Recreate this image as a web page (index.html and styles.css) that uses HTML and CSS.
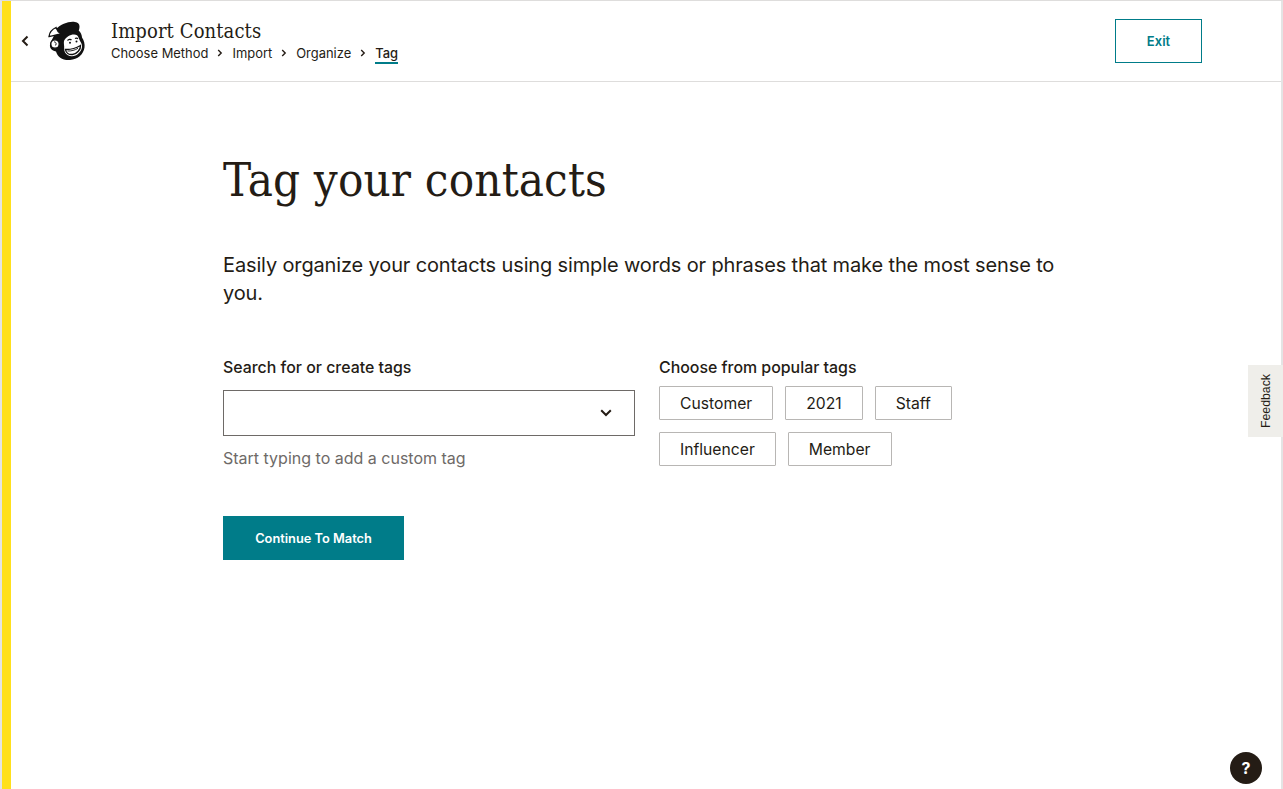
FILE: index.html
```html
<!DOCTYPE html>
<html lang="en">
<head>
<meta charset="utf-8">
<title>Import Contacts</title>
<link rel="stylesheet" href="styles.css">
</head>
<body>
<div class="frame">
  <div class="stripe"></div>
  <div class="page">
    <header class="topbar">
      <button class="back" aria-label="Back">
        <svg width="10" height="14" viewBox="0 0 10 14"><path d="M7.500 2.500 3 7l4.500 4.500" fill="none" stroke="#241c15" stroke-width="2"/></svg>
      </button>
      <svg class="logo" width="38" height="40" viewBox="0 0 38 40">
        <path d="M8 8C13 3 21 0 27 1c3 .5 4.500 2 4.500 4.500 0 1.500-.3 3-.8 4 2 2 3.300 4.500 3.300 7 2 3 3 6.500 2.500 10-1 7-7 12-14.500 12.500-7.500.5-12.500-3-14-8.500C3.500 29.500 1.500 27 2 23.500 2.500 20 6 17 8 8z" fill="#111"/>
        <path d="M1 15.500C1.500 11.500 4.500 8 8 6.500c1 3 2.500 5 5 6.500-4 .5-8.500 2-12 2.500z" fill="#fff" stroke="#111" stroke-width="1.300"/>
        <circle cx="7" cy="23" r="4.200" fill="#fff" stroke="#111" stroke-width="1.300"/>
        <path d="M6 21c2-.5 3 2.500 1 3.500" fill="none" stroke="#111" stroke-width="1"/>
        <path d="M16 20c2-4 6-6.500 10-6.500 2.500 0 4 1 4.500 3 .5 2 2.500 4.500 3.500 7.500.5 4-2 8.500-6.500 10.500-4 1.500-8.500.5-10.500-3-1.500-3-.5-5.500-1-7.500-.2-1.500-.2-3 0-4z" fill="#fff"/>
        <path d="M19.500 19.500c1.200-1.300 3-1.500 4-.5M27 17.500c1-.6 2.300-.4 2.800.5" fill="none" stroke="#111" stroke-width="1.200"/>
        <circle cx="22" cy="21.800" r="1" fill="#111"/>
        <circle cx="28.500" cy="20.500" r="1" fill="#111"/>
        <path d="M17.500 28.500c4.500.2 10-1 15-4 .3 4-3.500 8.500-8 9-3.500.4-6.500-1.500-7-5z" fill="#fff" stroke="#111" stroke-width="1.400"/>
        <path d="M19.500 30c3.500.2 7.500-.8 10.500-2.700" fill="none" stroke="#111" stroke-width=".9"/>
      </svg>
      <div class="titles">
        <div class="flow-title">Import Contacts</div>
        <nav class="crumbs">
          <span>Choose Method</span>
          <svg class="sep" width="6" height="8" viewBox="0 0 6 8"><path d="M1.200 1 4.200 4l-3 3" fill="none" stroke="#241c15" stroke-width="1.400"/></svg>
          <span>Import</span>
          <svg class="sep" width="6" height="8" viewBox="0 0 6 8"><path d="M1.200 1 4.200 4l-3 3" fill="none" stroke="#241c15" stroke-width="1.400"/></svg>
          <span>Organize</span>
          <svg class="sep" width="6" height="8" viewBox="0 0 6 8"><path d="M1.200 1 4.200 4l-3 3" fill="none" stroke="#241c15" stroke-width="1.400"/></svg>
          <span class="current">Tag</span>
        </nav>
      </div>
      <button class="exit">Exit</button>
    </header>
    <main class="content">
      <h1>Tag your contacts</h1>
      <p class="lead">Easily organize your contacts using simple words or phrases that make the most sense to you.</p>
      <div class="columns">
        <section class="col-left">
          <label class="field-label">Search for or create tags</label>
          <div class="select">
            <svg width="12" height="8" viewBox="0 0 12 8"><path d="M1.200 1.200 6 6l4.800-4.800" fill="none" stroke="#241c15" stroke-width="2"/></svg>
          </div>
          <div class="hint">Start typing to add a custom tag</div>
        </section>
        <section class="col-right">
          <div class="field-label">Choose from popular tags</div>
          <div class="tags">
            <button class="tag">Customer</button>
            <button class="tag">2021</button>
            <button class="tag">Staff</button>
            <button class="tag">Influencer</button>
            <button class="tag">Member</button>
          </div>
        </section>
      </div>
      <button class="primary">Continue To Match</button>
    </main>
  </div>
</div>
<div class="feedback"><span>Feedback</span></div>
<div class="help">?</div>
</body>
</html>
```
FILE: styles.css
```css
* { box-sizing: border-box; }
html, body { margin: 0; height: 100%; overflow: hidden; }
body { font-family: "Inter", "Liberation Sans", sans-serif; color: #241c15; background: #fff; }
button { font-family: inherit; cursor: pointer; }

.frame { display: flex; height: 789px; border-top: 1px solid #dedddc; border-left: 2px solid #e4e4e4; border-right: 2px solid #e4e4e4; }
.stripe { width: 9px; flex: none; background: #ffe01b; }
.page { flex: 1; min-width: 0; }

.topbar { display: flex; align-items: center; height: 81px; border-bottom: 1px solid #dedddc; }
.back { display: flex; border: 0; background: none; padding: 0; margin-left: 9px; width: 10px; }
.logo { margin-left: 18px; flex: none; }
.titles { margin-left: 25px; margin-top: -2px; }
.flow-title { font-family: "DejaVu Serif Condensed", "Liberation Serif", serif; font-size: 20px; line-height: 26px; letter-spacing: 0.1px; }
.crumbs { display: flex; align-items: center; gap: 9px; font-size: 12.950px; line-height: 18px; margin-top: 0; }
.crumbs .current { font-weight: 500; border-bottom: 2px solid #007c89; height: 20px; margin-bottom: -2px; }
.sep { flex: none; }
.exit { margin-left: auto; margin-right: 79px; width: 87px; height: 44px; border: 1px solid #007c89; background: #fff; color: #007c89; font-size: 13px; font-weight: 600; }

.content { padding: 0 0 0 212px; width: 1060px; }
h1 { margin: 65px 0 0; font-family: "DejaVu Serif Condensed", "Liberation Serif", serif; font-weight: 400; font-size: 47px; line-height: 66px; letter-spacing: 0.15px; }
.lead { margin: 38px 0 0; font-size: 20px; line-height: 28px; letter-spacing: -0.14px; }

.columns { display: flex; gap: 24px; margin-top: 51px; }
.col-left { width: 412px; flex: none; }
.field-label { display: block; font-size: 15.900px; line-height: 20px; font-weight: 500; }
.select { display: flex; align-items: center; justify-content: flex-end; height: 46px; margin-top: 12px; padding-right: 22px; border: 1px solid #6e6a67; }
.hint { margin-top: 10px; font-size: 16px; line-height: 24px; color: #6e6a67; }
.tags { display: flex; flex-wrap: wrap; gap: 12px; margin-top: 8px; width: 320px; }
.tag { height: 34px; padding: 1px 20px 0; border: 1px solid #b8b6b4; border-radius: 1px; background: #fff; color: #241c15; font-size: 15.700px; }

.primary { display: block; margin-top: 46px; width: 181px; height: 44px; border: 0; background: #007c89; color: #fff; font-size: 12.800px; font-weight: 600; }

.feedback { position: fixed; right: 0; top: 365px; width: 35px; height: 72px; padding-left: 1px; background: #efeeea; display: flex; align-items: center; justify-content: center; }
.feedback span { font-family: "Liberation Sans", sans-serif; font-size: 12.300px; transform: rotate(-90deg); white-space: nowrap; }
.help { position: fixed; left: 1230px; top: 752px; width: 32px; height: 32px; border-radius: 50%; background: #241c15; color: #fff; display: flex; align-items: center; justify-content: center; font-size: 16px; font-weight: 700; }
```
